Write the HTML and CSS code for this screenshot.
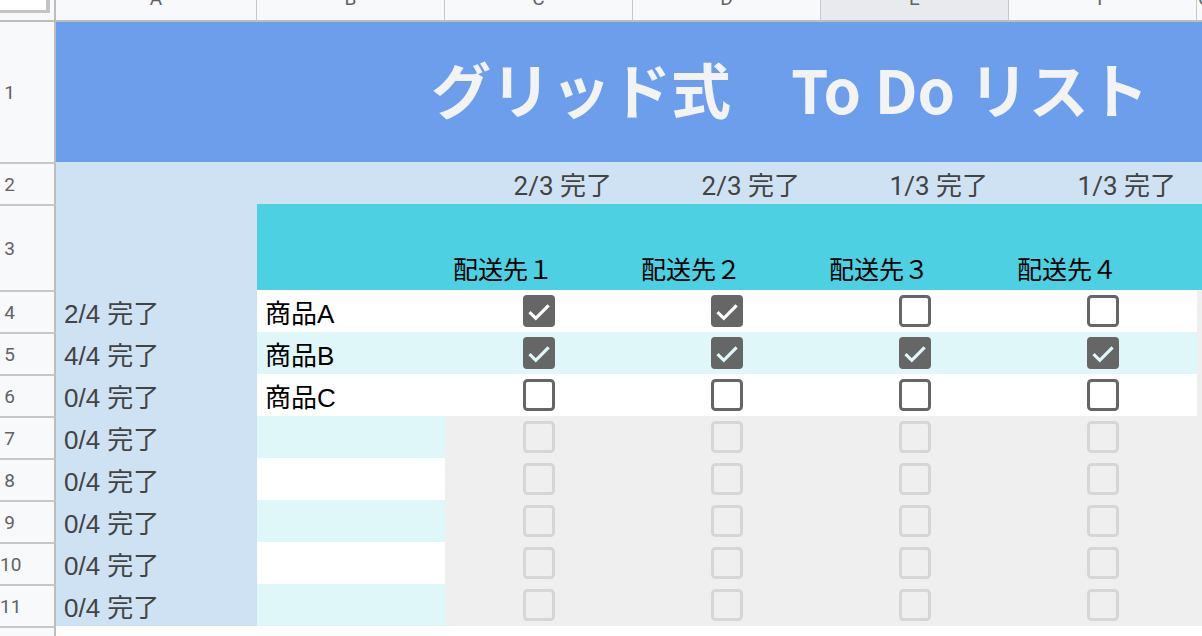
FILE: index.html
```html
<!DOCTYPE html>
<html>
<head>
	<meta charset="utf-8">
	<title>グリッド式 To Do リスト</title>
	<link rel="stylesheet" href="styles.css">
</head>

<body>
	<div class="sheet" id="sheet">
		<!-- column headers -->
		<div class="corner"><div class="select-all"></div></div>
		<div class="col-head"><span>A</span></div>
		<div class="col-head"><span>B</span></div>
		<div class="col-head"><span>C</span></div>
		<div class="col-head"><span>D</span></div>
		<div class="col-head active"><span>E</span></div>
		<div class="col-head"><span>F</span></div>
		<div class="col-head"><span>G</span></div>

		<!-- row 1: title -->
		<div class="row-head first"><span>1</span></div>
		<div class="title">グリッド式　To Do リスト</div>

		<!-- row 2: totals per destination -->
		<div class="row-head"><span>2</span></div>
		<div class="cell sky"></div>
		<div class="cell sky"></div>
		<div class="cell sky total" id="total-0"></div>
		<div class="cell sky total" id="total-1"></div>
		<div class="cell sky total" id="total-2"></div>
		<div class="cell sky total" id="total-3"></div>
		<div class="cell sky"></div>

		<!-- row 3: destinations -->
		<div class="row-head"><span>3</span></div>
		<div class="cell sky"></div>
		<div class="cell cyan"></div>
		<div class="cell cyan dest">配送先１</div>
		<div class="cell cyan dest">配送先２</div>
		<div class="cell cyan dest">配送先３</div>
		<div class="cell cyan dest">配送先４</div>
		<div class="cell cyan"></div>
	</div>

	<script type="text/javascript">
		const items = [
			{ name: '商品A', done: [true, true, false, false] },
			{ name: '商品B', done: [true, true, true, true] },
			{ name: '商品C', done: [false, false, false, false] },
			{ name: '', done: [false, false, false, false] },
			{ name: '', done: [false, false, false, false] },
			{ name: '', done: [false, false, false, false] },
			{ name: '', done: [false, false, false, false] },
			{ name: '', done: [false, false, false, false] }
		]

		let sheet = document.getElementById('sheet')

		function cell(cls, text) {
			let div = document.createElement('div')
			div.className = 'cell ' + cls
			if (text) div.textContent = text
			sheet.appendChild(div)
			return div
		}

		function checkbox(checked, bg) {
			if (checked) {
				return '<svg class="box" viewBox="0 0 32 32" width="32" height="32">' +
					'<rect width="32" height="32" rx="4" fill="#666"/>' +
					'<path d="M6.5 17.2l6.3 6.1L25.6 10.4" fill="none" stroke="' + bg + '" stroke-width="3.2"/></svg>'
			}
			return '<svg class="box" viewBox="0 0 32 32" width="32" height="32">' +
				'<rect x="1.5" y="1.5" width="29" height="29" rx="3" fill="none" stroke="currentColor" stroke-width="3"/></svg>'
		}

		items.forEach(function(item, i) {
			let rowNum = i + 4
			let band = i % 2 == 1 ? 'stripe' : 'plain'
			let bg = i % 2 == 1 ? '#e0f7fa' : '#ffffff'
			let count = item.done.filter(Boolean).length

			let head = document.createElement('div')
			head.className = 'row-head'
			head.innerHTML = '<span>' + rowNum + '</span>'
			sheet.appendChild(head)

			cell('sky count', count + '/4 完了')
			cell(band + ' item', item.name)
			item.done.forEach(function(done) {
				let c = cell((item.name ? band : 'off') + ' check')
				c.innerHTML = checkbox(done, bg)
			})
			cell('off')
		})

		// empty row under the list
		let last = document.createElement('div')
		last.className = 'row-head'
		last.innerHTML = '<span>12</span>'
		sheet.appendChild(last)
		for (let k = 0; k < 7; k++) cell('plain')

		// totals per destination, only rows with a product
		let listed = items.filter(function(item) { return item.name })
		for (let d = 0; d < 4; d++) {
			let n = listed.filter(function(item) { return item.done[d] }).length
			document.getElementById('total-' + d).textContent = n + '/' + listed.length + ' 完了'
		}
	</script>
</body>
</html>
```

FILE: styles.css
```css
body{
	margin: 0;
	background: #fff;
	font-family: "Liberation Sans", "Noto Sans CJK JP", sans-serif;
	overflow: hidden;
}
.sheet{
	display: grid;
	grid-template-columns: 56px 201px repeat(5, 188px) 1fr;
	grid-template-rows: 22px 140px 42px 86px repeat(9, 42px);
	height: 636px;
	overflow: hidden;
}

/* headers */
.corner{
	background: #f8f9fa;
	border-right: 2px solid #bdbdbd;
	border-bottom: 2px solid #bdbdbd;
}
.select-all{
	width: 50px;
	height: 13px;
	box-sizing: border-box;
	background: #fff;
	border-right: 4px solid #c4c4c4;
	border-bottom: 3px solid #c4c4c4;
}
.col-head{
	background: #f8f9fa;
	border-right: 1px solid #c7c7c7;
	border-bottom: 2px solid #bdbdbd;
	font-family: Roboto, sans-serif;
	font-size: 19px;
	color: #5f6368;
	text-align: center;
	overflow: hidden;
}
.col-head span{
	display: block;
	line-height: 19px;
	margin-top: -11px;
}
.col-head.active{
	background: #e8eaed;
}
.row-head{
	background: #f8f9fa;
	border-right: 2px solid #bdbdbd;
	border-top: 2px solid #c6c6c6;
	display: flex;
	align-items: center;
	font-family: Roboto, sans-serif;
	font-size: 19px;
	color: #5f6368;
}
.row-head.first{
	border-top: none;
}
.row-head span{
	width: 19px;
	text-align: center;
}

/* title */
.title{
	grid-column: 2 / -1;
	background: #6d9eeb;
	color: #f3f3f3;
	font-family: "Noto Sans CJK JP", sans-serif;
	font-weight: 700;
	font-size: 60px;
	display: flex;
	align-items: center;
	padding-left: 375px;
	padding-bottom: 10px;
	white-space: nowrap;
	overflow: hidden;
}

/* cells */
.cell{
	display: flex;
	align-items: center;
	padding: 0 8px;
	font-size: 26px;
	white-space: nowrap;
	overflow: hidden;
	min-width: 0;
}
.sky{
	background: #cfe2f3;
}
.cyan{
	background: #4dd0e1;
}
.plain{
	background: #fff;
}
.stripe{
	background: #e0f7fa;
}
.off{
	background: #efefef;
	color: #d6d6d6;
}
.count{
	color: #434343;
}
.total{
	justify-content: flex-end;
	padding-right: 21px;
	font-family: Roboto, "Noto Sans CJK JP", sans-serif;
	color: #434343;
}
.dest{
	align-items: flex-end;
	padding-bottom: 4px;
	font-size: 25px;
	color: #000;
}
.item{
	color: #000;
}
.check{
	justify-content: center;
	padding: 0;
	color: #666;
}
.off.check{
	color: #d6d6d6;
}
.box{
	display: block;
}
```
